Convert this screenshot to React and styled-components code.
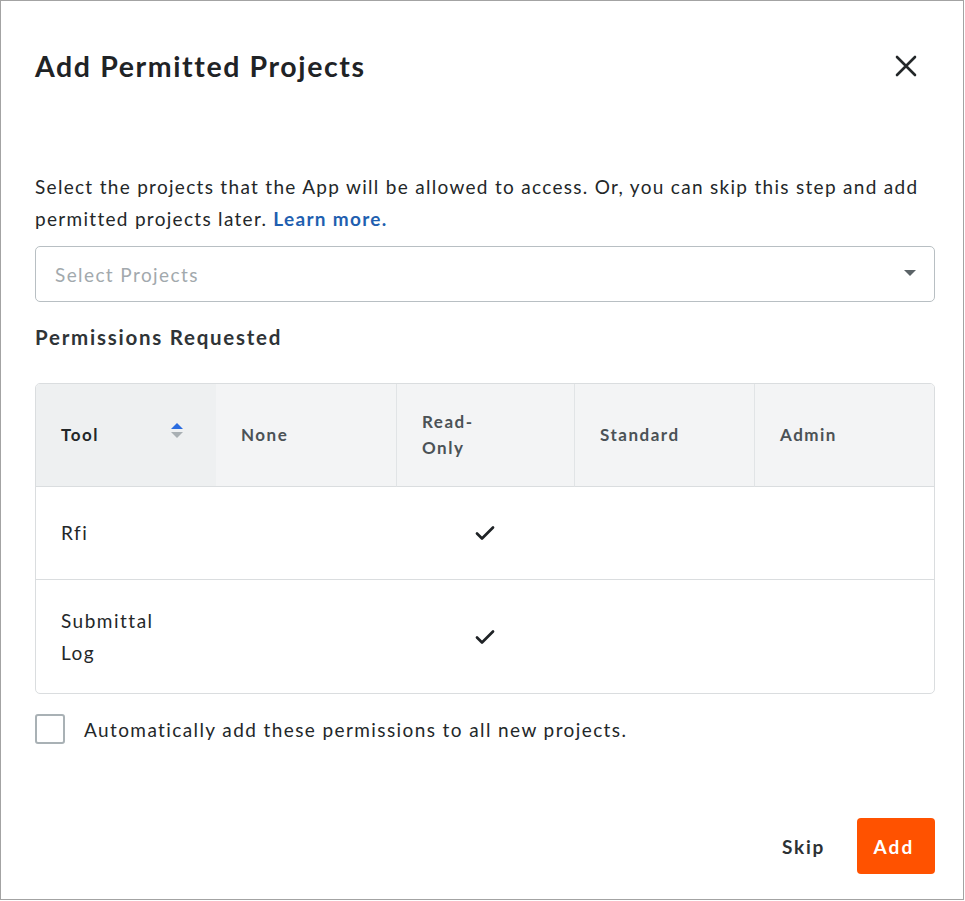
import React from 'react';
import styled, { createGlobalStyle } from 'styled-components';

const GlobalStyle = createGlobalStyle`
  html, body {
    margin: 0;
    padding: 0;
    background: #ffffff;
  }
  body {
    font-family: Lato, "Open Sans", "Liberation Sans", sans-serif;
    color: #232729;
  }
  * {
    box-sizing: border-box;
  }
`;

const Frame = styled.div`
  width: 964px;
  height: 900px;
  border: 1.5px solid #a3a3a3;
  background: #fff;
  display: flex;
  flex-direction: column;
  padding: 0 28px 0 34px;
`;

const Header = styled.div`
  display: flex;
  align-items: center;
  justify-content: space-between;
  height: 132px;
`;

const Title = styled.h1`
  margin: -2px 0 0;
  font-size: 28.5px;
  font-weight: 700;
  color: #1f2326;
  letter-spacing: 1.6px;
`;

const CloseButton = styled.button`
  border: none;
  background: none;
  padding: 0;
  margin-right: 16px;
  margin-top: -2px;
  width: 26px;
  height: 26px;
  display: flex;
  align-items: center;
  justify-content: center;
  cursor: pointer;
`;

const Description = styled.p`
  margin: 38px 0 0;
  font-size: 19px;
  line-height: 32px;
  letter-spacing: 1.3px;
  color: #232729;
`;

const LearnMore = styled.a`
  color: #1f5fb0;
  font-weight: 700;
  text-decoration: none;
`;

const SelectBox = styled.div`
  margin-top: 11px;
  height: 56px;
  border: 1.5px solid #b8bfc3;
  border-radius: 5px;
  display: flex;
  align-items: center;
  justify-content: space-between;
  padding: 0 18px 0 19px;
`;

const Placeholder = styled.span`
  font-size: 19px;
  letter-spacing: 1.4px;
  color: #a2a9ad;
`;

const Caret = styled.span`
  width: 0;
  height: 0;
  border-left: 6.5px solid transparent;
  border-right: 6.5px solid transparent;
  border-top: 6.5px solid #5b6367;
  margin-top: -2px;
`;

const SectionTitle = styled.h2`
  margin: 21px 0 0;
  font-size: 20.5px;
  font-weight: 700;
  letter-spacing: 1.75px;
  color: #2f3437;
  line-height: 28px;
`;

const Table = styled.div`
  margin-top: 32px;
  border: 1.5px solid #dadddf;
  border-radius: 5px;
  overflow: hidden;
  display: grid;
  grid-template-columns: 180px 180px 178px 180px 1fr;
`;

const HeadCell = styled.div`
  height: 103px;
  background: ${p => (p.$active ? '#eef0f1' : '#f3f4f5')};
  border-left: ${p => (p.$divider ? '1.5px solid #e1e4e6' : 'none')};
  border-bottom: 1.5px solid #dadddf;
  display: flex;
  align-items: center;
  justify-content: space-between;
  padding: 0 33px 0 25px;
  font-size: 17px;
  font-weight: 700;
  letter-spacing: 1.5px;
  line-height: 26px;
  color: ${p => (p.$active ? '#232729' : '#4b5256')};
`;

const SortIcon = styled.span`
  display: flex;
  flex-direction: column;
  gap: 3px;
  margin-top: -10px;

  &::before,
  &::after {
    content: '';
    width: 0;
    height: 0;
    border-left: 6.5px solid transparent;
    border-right: 6.5px solid transparent;
  }
  &::before {
    border-bottom: 6px solid #2a6ce0;
  }
  &::after {
    border-top: 6px solid #a9b0b4;
  }
`;

const BodyCell = styled.div`
  height: ${p => p.$height}px;
  border-top: ${p => (p.$first ? 'none' : '1.5px solid #dadddf')};
  display: flex;
  align-items: center;
  justify-content: ${p => (p.$center ? 'center' : 'flex-start')};
  padding: 0 25px;
  font-size: 19px;
  letter-spacing: 1.5px;
  line-height: 32px;
  color: #232729;
`;

const CheckRow = styled.label`
  display: flex;
  align-items: center;
  gap: 19px;
  margin-top: 20px;
  font-size: 19px;
  letter-spacing: 1.4px;
  color: #232729;
`;

const CheckBox = styled.span`
  width: 30px;
  height: 30px;
  border: 2px solid #a9b1b5;
  border-radius: 3px;
  background: #fff;
`;

const Footer = styled.div`
  margin-top: auto;
  margin-bottom: 25px;
  display: flex;
  align-items: center;
  justify-content: flex-end;
  gap: 32px;
`;

const TextButton = styled.button`
  border: none;
  background: none;
  padding: 0;
  font-family: inherit;
  font-size: 19px;
  font-weight: 700;
  letter-spacing: 1.75px;
  color: #2c3134;
`;

const PrimaryButton = styled.button`
  border: none;
  border-radius: 4px;
  background: #ff5200;
  color: #fff;
  font-family: inherit;
  font-size: 19px;
  font-weight: 700;
  letter-spacing: 2.2px;
  padding-left: 2px;
  width: 78px;
  height: 56px;
`;

const Check = () => (
  <svg width="20" height="16" viewBox="0 0 20 16">
    <path d="M2 8.5 L7 13.5 L18 2.5" fill="none" stroke="#1f2326" strokeWidth="2.7" strokeLinecap="round" strokeLinejoin="round" />
  </svg>
);

const rows = [
  { name: 'Rfi', height: 92 },
  { name: <>Submittal<br />Log</>, height: 114 },
];

export default function App() {
  return (
    <>
      <GlobalStyle />
      <Frame>
        <Header>
          <Title>Add Permitted Projects</Title>
          <CloseButton aria-label="Close">
            <svg width="22" height="22" viewBox="0 0 22 22">
              <path d="M2 2 L20 20 M20 2 L2 20" stroke="#232729" strokeWidth="2.6" strokeLinecap="round" />
            </svg>
          </CloseButton>
        </Header>
        <Description>
          Select the projects that the App will be allowed to access. Or, you can skip this step and add permitted projects later.{' '}
          <LearnMore href="#">Learn more.</LearnMore>
        </Description>
        <SelectBox>
          <Placeholder>Select Projects</Placeholder>
          <Caret />
        </SelectBox>
        <SectionTitle>Permissions Requested</SectionTitle>
        <Table>
          <HeadCell $active>
            Tool
            <SortIcon />
          </HeadCell>
          <HeadCell>None</HeadCell>
          <HeadCell $divider>Read-<br />Only</HeadCell>
          <HeadCell $divider>Standard</HeadCell>
          <HeadCell $divider>Admin</HeadCell>
          {rows.map((r, i) => (
            <React.Fragment key={i}>
              <BodyCell $height={r.height} $first={i === 0}>{r.name}</BodyCell>
              <BodyCell $height={r.height} $first={i === 0} />
              <BodyCell $height={r.height} $first={i === 0} $center><Check /></BodyCell>
              <BodyCell $height={r.height} $first={i === 0} />
              <BodyCell $height={r.height} $first={i === 0} />
            </React.Fragment>
          ))}
        </Table>
        <CheckRow>
          <CheckBox />
          Automatically add these permissions to all new projects.
        </CheckRow>
        <Footer>
          <TextButton>Skip</TextButton>
          <PrimaryButton>Add</PrimaryButton>
        </Footer>
      </Frame>
    </>
  );
}
